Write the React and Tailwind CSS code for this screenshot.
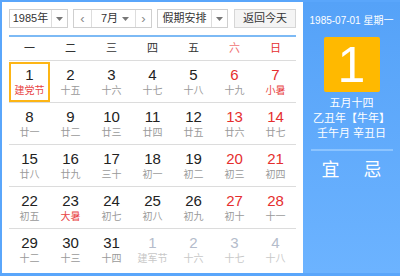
import React from 'react';

const weekdays = [
    { t: '一', c: 'text-[#333]' },
    { t: '二', c: 'text-[#333]' },
    { t: '三', c: 'text-[#333]' },
    { t: '四', c: 'text-[#333]' },
    { t: '五', c: 'text-[#333]' },
    { t: '六', c: 'text-[#f07373]' },
    { t: '日', c: 'text-[#e52e2e]' },
];

// [day, lunar, festival?, otherMonth?]
const rows = [
    [[1, '建党节', true], [2, '十五'], [3, '十六'], [4, '十七'], [5, '十八'], [6, '十九'], [7, '小暑', true]],
    [[8, '廿一'], [9, '廿二'], [10, '廿三'], [11, '廿四'], [12, '廿五'], [13, '廿六'], [14, '廿七']],
    [[15, '廿八'], [16, '廿九'], [17, '三十'], [18, '初一'], [19, '初二'], [20, '初三'], [21, '初四']],
    [[22, '初五'], [23, '大暑', true], [24, '初七'], [25, '初八'], [26, '初九'], [27, '初十'], [28, '十一']],
    [[29, '十二'], [30, '十三'], [31, '十四'], [1, '建军节', false, true], [2, '十六', false, true], [3, '十七', false, true], [4, '十八', false, true]],
];

const Caret = () => (
    <svg width="7" height="4" viewBox="0 0 7 4" className="block shrink-0">
        <path d="M0 0h7L3.5 4z" fill="#777" />
    </svg>
);

const DayCell = ({ cell, col, selected }) => {
    const [day, lunar, fest, other] = cell;
    const weekend = col >= 5;
    let numColor = 'text-[#222]';
    if (other) numColor = 'text-[#b4bccb]';
    else if (weekend) numColor = 'text-[#e52e2e]';
    let lunarColor = 'text-[#9a9a9a]';
    if (other) lunarColor = 'text-[#c8c8c8]';
    else if (fest) lunarColor = 'text-[#e84545]';
    return (
        <div className="h-[41px] flex items-center justify-center">
            <div className={`w-[41px] h-[40px] flex flex-col items-center ${selected ? 'border-2 border-[#fdb515] pt-[3px]' : 'pt-[5px]'}`}>
                <span className={`text-[15px] leading-[16px] ${numColor}`}>{day}</span>
                <span className={`text-[10px] leading-[12px] mt-[2px] whitespace-nowrap ${lunarColor}`}>{lunar}</span>
            </div>
        </div>
    );
};

export default function App() {
    return (
        <div
            className="w-[400px] h-[276px] bg-[#5aa6fb] pt-[2px] pl-[2px] pb-[3px] flex"
            style={{ fontFamily: '"Liberation Sans", "Noto Sans CJK SC", sans-serif' }}
        >
            <div className="w-[301px] shrink-0 h-full bg-white pl-[7px] pr-[5px] pt-[7px]">
                <div className="flex items-center h-[19px] text-[11px] text-[#333] whitespace-nowrap">
                    <div className="w-[59px] h-[19px] border border-[#cfcfcf] flex items-center">
                        <span className="w-[41px] text-center leading-[17px]">1985年</span>
                        <span className="h-full border-l border-[#ddd] flex-1 flex items-center justify-center"><Caret /></span>
                    </div>
                    <div className="ml-[5px] w-[79px] h-[19px] border border-[#cfcfcf] flex items-center">
                        <span className="w-[17px] h-full flex items-center justify-center text-[#888] text-[13px]">‹</span>
                        <span className="h-full border-l border-r border-[#ddd] w-[45px] flex items-center justify-between pl-[9px] pr-[6px]">
                            <span className="leading-[17px]">7月</span>
                            <Caret />
                        </span>
                        <span className="flex-1 h-full flex items-center justify-center text-[#888] text-[13px]">›</span>
                    </div>
                    <div className="ml-[5px] w-[71px] h-[19px] border border-[#cfcfcf] flex items-center">
                        <span className="w-[53px] text-center leading-[17px]">假期安排</span>
                        <span className="h-full border-l border-[#ddd] flex-1 flex items-center justify-center"><Caret /></span>
                    </div>
                    <div className="ml-[6px] w-[62px] h-[19px] border border-[#d6d6d6] bg-[#f4f4f4] flex items-center justify-center leading-[17px]">
                        返回今天
                    </div>
                </div>
                <div className="mt-[7px] h-[2px] bg-[#7dbaf5] w-[287px]" />
                <div className="grid grid-cols-7 w-[287px] h-[24px] border-b border-[#dcdcdc] text-[11px] items-center">
                    {weekdays.map((w) => (
                        <div key={w.t} className={`text-center ${w.c}`}>{w.t}</div>
                    ))}
                </div>
                <div className="w-[287px]">
                    {rows.map((row, ri) => (
                        <div key={ri} className={`grid grid-cols-7 ${ri < rows.length - 1 ? 'border-b border-[#dcdcdc]' : ''}`}>
                            {row.map((cell, ci) => (
                                <DayCell key={ci} cell={cell} col={ci} selected={ri === 0 && ci === 0} />
                            ))}
                        </div>
                    ))}
                </div>
            </div>
            <div className="flex-1 h-full bg-gradient-to-b from-[#55a2f8] to-[#6cb3ff] flex flex-col items-center text-white whitespace-nowrap">
                <div className="mt-[12px] text-[10px] leading-[14px]">1985-07-01 星期一</div>
                <div className="mt-[9px] w-[56px] h-[55px] bg-[#ffb900] rounded-[2px] flex items-center justify-center text-[50px] leading-none">1</div>
                <div className="mt-[4px] text-[11px] leading-[15px]">五月十四</div>
                <div className="text-[11px] leading-[15px]">乙丑年【牛年】</div>
                <div className="text-[11px] leading-[15px]">壬午月 辛丑日</div>
                <div className="mt-[8px] w-[82px] h-[2px] bg-[#8cc4ff]" />
                <div className="mt-[8px] flex gap-[24px] text-[18px] leading-[22px]">
                    <span>宜</span>
                    <span>忌</span>
                </div>
            </div>
        </div>
    );
}
